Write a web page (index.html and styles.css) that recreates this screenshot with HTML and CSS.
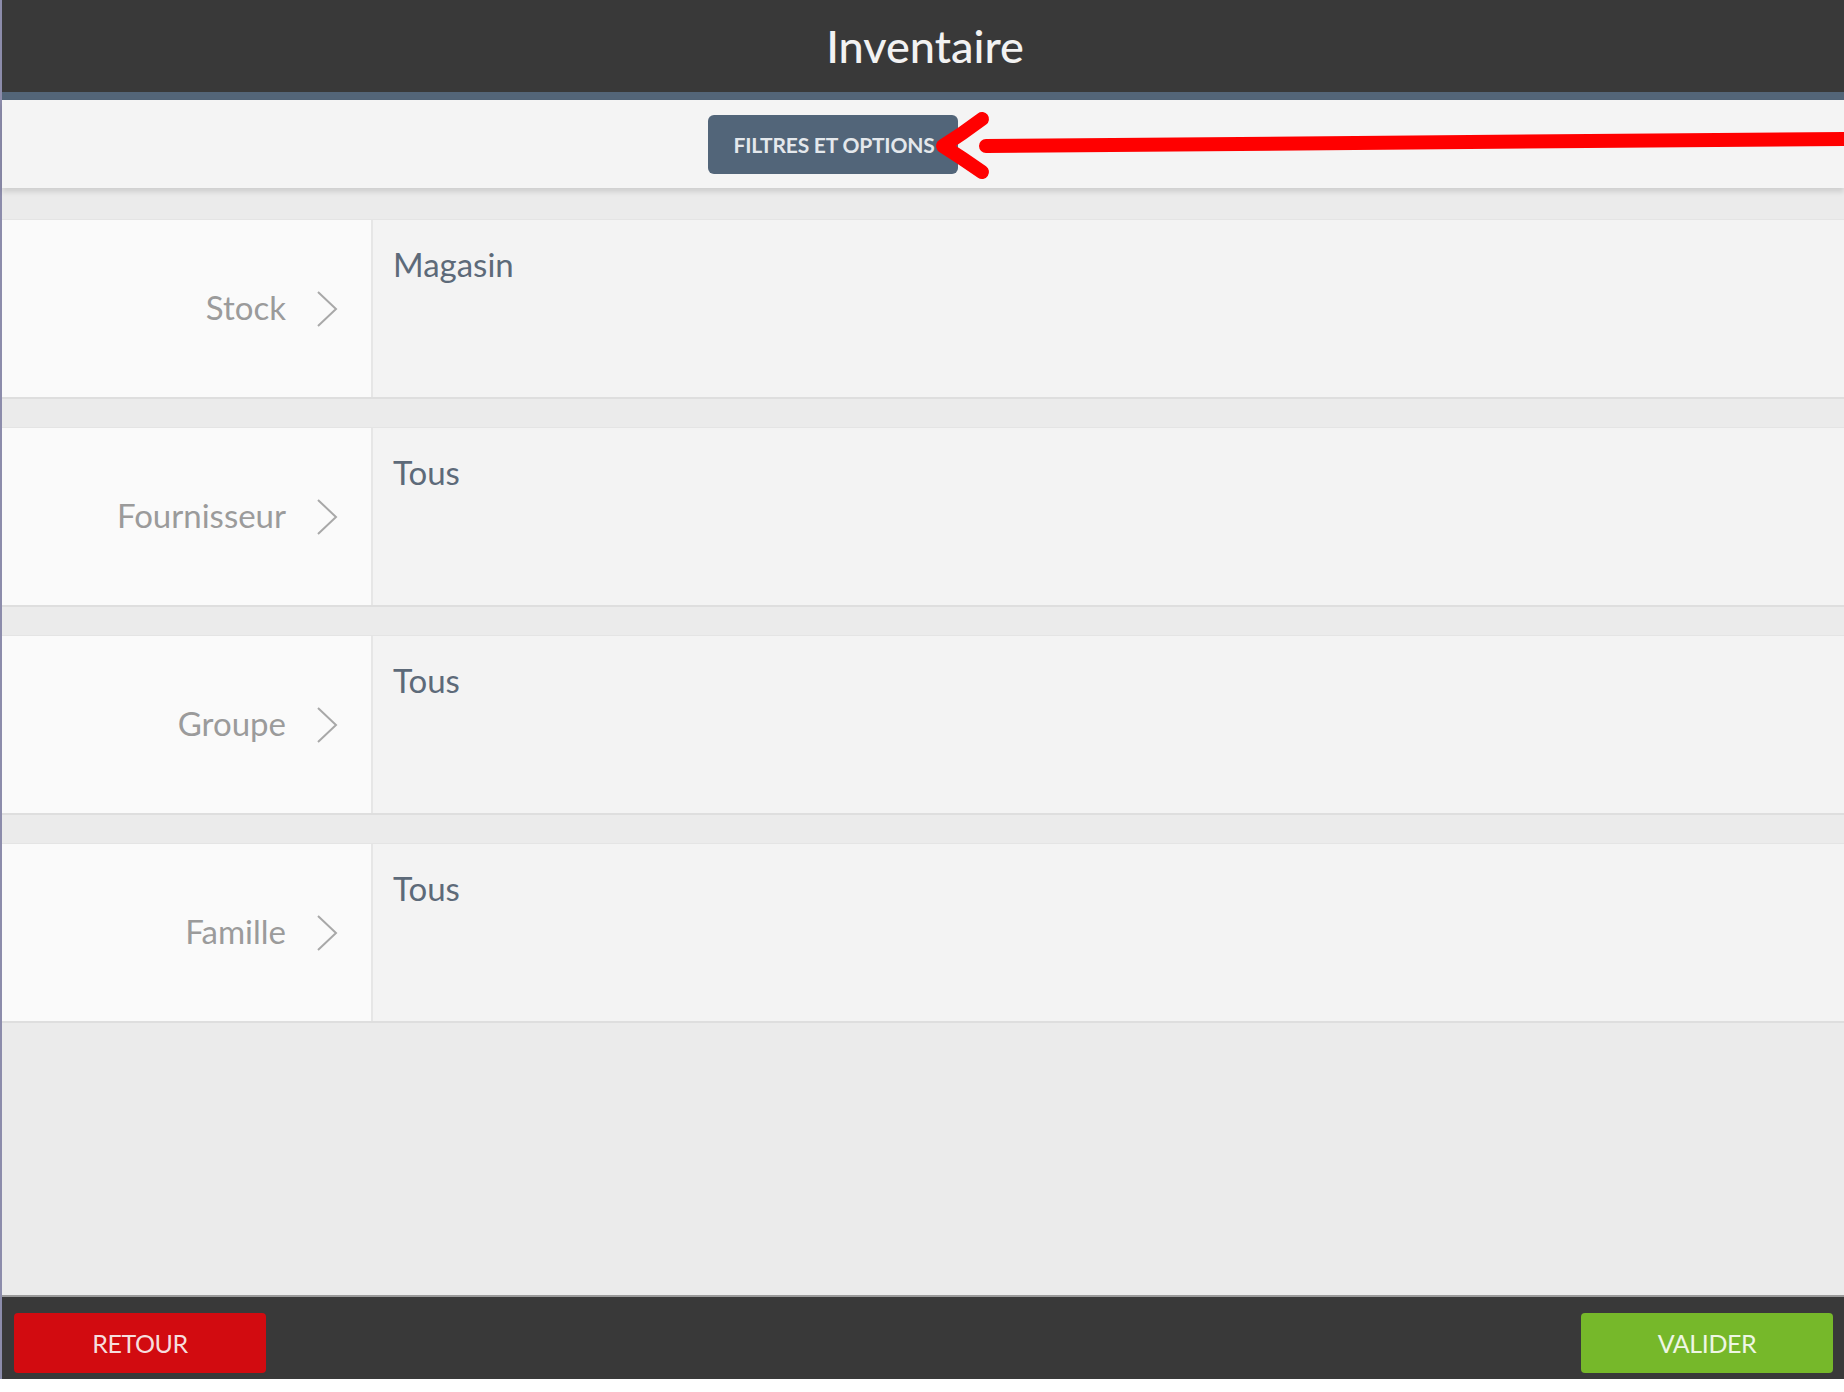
FILE: index.html
```html
<!DOCTYPE html>
<html lang="fr">
  <head>
    <meta charset="UTF-8" />
    <meta name="viewport" content="width=device-width, initial-scale=1.0" />
    <title>Inventaire</title>
    <link rel="stylesheet" href="styles.css">
  </head>
  <body>
    <div class="app">
      <header class="topbar">
        <h1>Inventaire</h1>
      </header>

      <div class="toolbar">
        <button class="btn-filters">FILTRES ET OPTIONS</button>
      </div>

      <main class="filter-list">
        <div class="filter-row">
          <div class="filter-label">
            <span>Stock</span>
            <svg class="chevron" viewBox="0 0 22 36"><path d="M2 1 L20 18 L2 35" /></svg>
          </div>
          <div class="filter-value">Magasin</div>
        </div>
        <div class="filter-row">
          <div class="filter-label">
            <span>Fournisseur</span>
            <svg class="chevron" viewBox="0 0 22 36"><path d="M2 1 L20 18 L2 35" /></svg>
          </div>
          <div class="filter-value">Tous</div>
        </div>
        <div class="filter-row">
          <div class="filter-label">
            <span>Groupe</span>
            <svg class="chevron" viewBox="0 0 22 36"><path d="M2 1 L20 18 L2 35" /></svg>
          </div>
          <div class="filter-value">Tous</div>
        </div>
        <div class="filter-row">
          <div class="filter-label">
            <span>Famille</span>
            <svg class="chevron" viewBox="0 0 22 36"><path d="M2 1 L20 18 L2 35" /></svg>
          </div>
          <div class="filter-value">Tous</div>
        </div>
      </main>

      <footer class="bottombar">
        <button class="btn btn-back">RETOUR</button>
        <button class="btn btn-ok">VALIDER</button>
      </footer>
    </div>

    <!-- annotation arrow drawn over the screenshot -->
    <svg class="annotation" viewBox="0 0 1844 1392">
      <path d="M986 146 L1844 139" />
      <path d="M982 119 Q962 134 943 146 Q962 158 982 172" />
    </svg>
  </body>
</html>
```

FILE: styles.css
```css
body {
  margin: 0;
  background-color: #ffffff;
  font-family: Lato, "Open Sans", sans-serif;
}

.app {
  display: flex;
  flex-direction: column;
  height: 1379px;
  border-left: 2px solid #8c8cab;
  box-sizing: border-box;
}

.topbar {
  height: 92px;
  background-color: #393939;
  border-top: 2px solid #6a6a6a;
  border-bottom: 8px solid #536578;
  box-sizing: content-box;
  display: flex;
  align-items: center;
  justify-content: center;
  margin-top: -2px;
}

.topbar h1 {
  margin: 0;
  font-size: 45px;
  font-weight: 500;
  color: #f2f2f2;
  padding-left: 4px;
}

.toolbar {
  height: 88px;
  background-color: #f4f4f4;
  display: flex;
  align-items: center;
  padding-left: 706px;
  box-shadow: 0 4px 5px rgba(0, 0, 0, 0.12);
  position: relative;
  z-index: 1;
}

.btn-filters {
  width: 250px;
  height: 59px;
  border: none;
  border-radius: 6px;
  background-color: #526579;
  color: #e4e8ec;
  font-family: Lato, sans-serif;
  font-size: 21px;
  font-weight: 700;
  letter-spacing: -0.2px;
  padding: 0 0 0 2px;
}

.filter-list {
  flex: 1;
  background-color: #ebebeb;
  display: flex;
  flex-direction: column;
  gap: 28px;
  padding-top: 31px;
}

.filter-row {
  height: 180px;
  display: flex;
  border-top: 1px solid #e4e4e4;
  border-bottom: 2px solid #dedede;
  box-sizing: border-box;
}

.filter-label {
  width: 371px;
  background-color: #fafafa;
  border-right: 2px solid #e6e6e6;
  display: flex;
  align-items: center;
  justify-content: flex-end;
  gap: 30px;
  padding-right: 33px;
  box-sizing: border-box;
  font-size: 33px;
  color: #9b9b9b;
  padding-bottom: 4px;
}

.chevron {
  width: 22px;
  height: 36px;
  fill: none;
  stroke: #a8a8a8;
  stroke-width: 2;
  margin-top: 4px;
}

.filter-value {
  flex: 1;
  background-color: #f3f3f3;
  padding: 24px 0 0 20px;
  font-size: 33px;
  color: #5d6a79;
}

.bottombar {
  background-color: #393939;
  border-top: 2px solid #9a9a9a;
  display: flex;
  justify-content: space-between;
  padding: 16px 11px 0 12px;
  box-sizing: border-box;
  height: 84px;
}

.btn {
  width: 252px;
  height: 60px;
  border: none;
  border-radius: 4px;
  font-family: Lato, sans-serif;
  font-size: 25px;
  letter-spacing: -0.4px;
  padding: 0;
}

.btn-back {
  background-color: #d20b10;
  color: #f6dede;
}

.btn-ok {
  background-color: #76b82a;
  color: #eef6e4;
}

.annotation {
  position: absolute;
  top: 0;
  left: 0;
  width: 1844px;
  height: 1392px;
  pointer-events: none;
  z-index: 5;
}

.annotation path {
  fill: none;
  stroke: #ff0000;
  stroke-width: 14;
  stroke-linecap: round;
  stroke-linejoin: round;
}
```
